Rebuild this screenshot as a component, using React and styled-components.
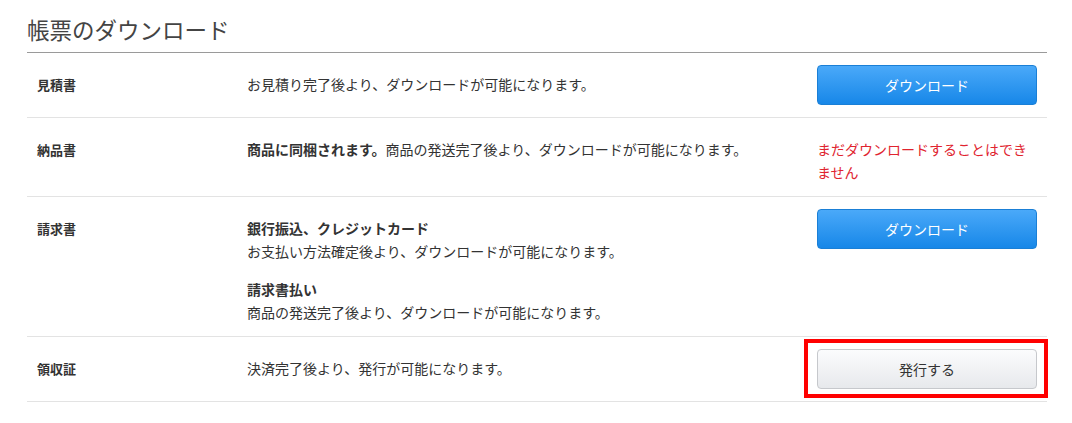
import { createGlobalStyle, styled } from 'styled-components';

const GlobalStyle = createGlobalStyle`
  body {
    margin: 0;
    background: #fff;
    color: #333;
    font-family: "Noto Sans CJK JP", "Noto Sans", sans-serif;
  }
`

const Page = styled.div`
  width: 1020px;
  padding-left: 27px;
`

const Title = styled.h2`
  margin: 0;
  padding: 13px 0 7px;
  font-size: 22.5px;
  line-height: 32px;
  font-weight: 400;
  color: #444;
  border-bottom: 1px solid #9a9a9a;
`

const Row = styled.div`
  display: grid;
  grid-template-columns: 220px 570px 220px;
  padding: 12px 0;
  border-bottom: 1px solid #e3e3e3;
`

const Label = styled.div`
  padding: 8px 0 0 10px;
  font-size: 13px;
  line-height: 23px;
  font-weight: 700;
  color: #333;
`

const Body = styled.div`
  padding-top: 8px;
  font-size: 14px;
  line-height: 23px;
  color: #333;
`

const Block = styled.div`
  & + & {
    margin-top: 15px;
  }
`

const Strong = styled.span`
  font-weight: 700;
`

const Action = styled.div`
  position: relative;
  ${({ $highlight }) => $highlight && `
    &::after {
      content: "";
      position: absolute;
      left: -13px;
      right: -11px;
      top: -10px;
      bottom: -9px;
      border: 4px solid #f00;
      pointer-events: none;
    }
  `}
`

const Button = styled.button`
  display: block;
  width: 220px;
  height: 40px;
  border-radius: 4px;
  font-family: inherit;
  font-size: 14px;
  cursor: pointer;
  border: 1px solid ${({ $primary }) => ($primary ? '#1a7fd6' : '#c6c8cc')};
  color: ${({ $primary }) => ($primary ? '#fff' : '#333')};
  background: ${({ $primary }) =>
    $primary
      ? 'linear-gradient(#4aa9f9, #1787e8)'
      : 'linear-gradient(#fbfcfd, #e7e9ec)'};
`

const Notice = styled.div`
  padding-top: 8px;
  font-size: 14px;
  line-height: 23px;
  color: #e0242f;
`

export default function App() {
  return (
    <Page>
      <GlobalStyle />
      <Title>帳票のダウンロード</Title>
      <Row>
        <Label>見積書</Label>
        <Body>お見積り完了後より、ダウンロードが可能になります。</Body>
        <Action>
          <Button $primary>ダウンロード</Button>
        </Action>
      </Row>
      <Row>
        <Label>納品書</Label>
        <Body>
          <Strong>商品に同梱されます。</Strong>商品の発送完了後より、ダウンロードが可能になります。
        </Body>
        <Notice>まだダウンロードすることはできません</Notice>
      </Row>
      <Row>
        <Label>請求書</Label>
        <Body>
          <Block>
            <Strong>銀行振込、クレジットカード</Strong>
            <div>お支払い方法確定後より、ダウンロードが可能になります。</div>
          </Block>
          <Block>
            <Strong>請求書払い</Strong>
            <div>商品の発送完了後より、ダウンロードが可能になります。</div>
          </Block>
        </Body>
        <Action>
          <Button $primary>ダウンロード</Button>
        </Action>
      </Row>
      <Row>
        <Label>領収証</Label>
        <Body>決済完了後より、発行が可能になります。</Body>
        <Action $highlight>
          <Button>発行する</Button>
        </Action>
      </Row>
    </Page>
  );
}
